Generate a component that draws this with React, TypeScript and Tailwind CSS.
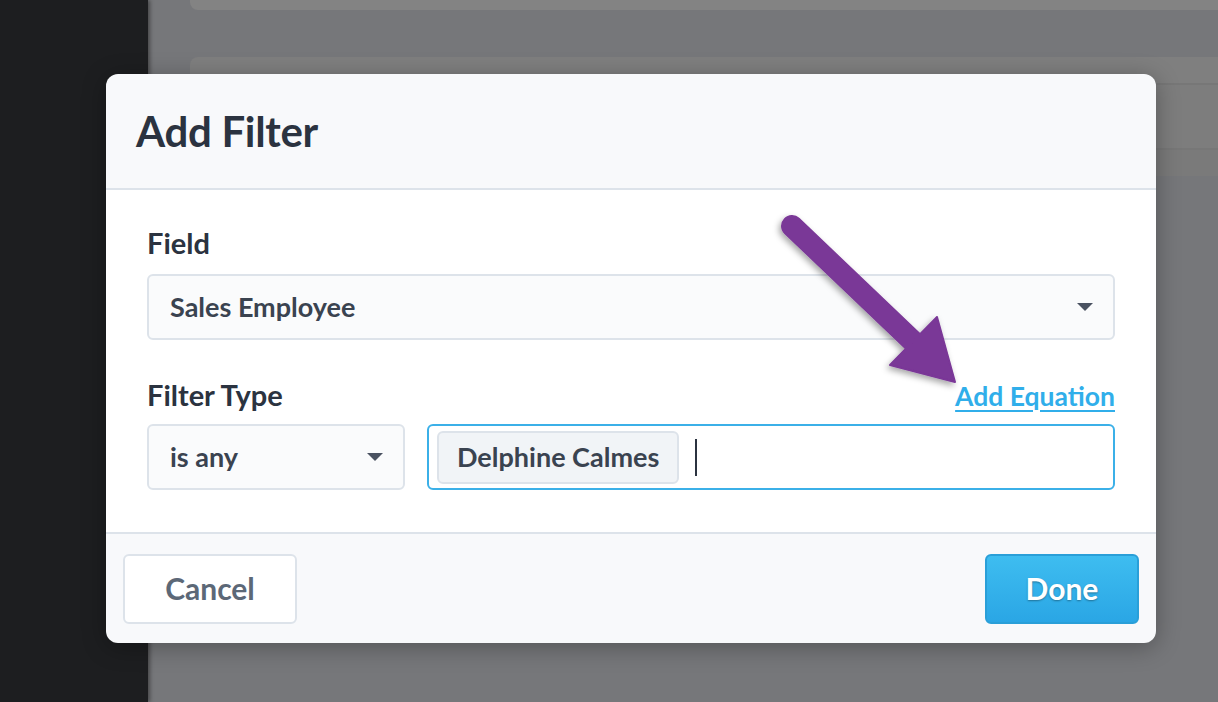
const font = { fontFamily: 'Lato, "Open Sans", sans-serif' };

function Caret() {
  return (
    <svg width="16" height="8" viewBox="0 0 16 8" className="shrink-0">
      <path d="M0 0 H16 L8 8 Z" fill="#4a5261" />
    </svg>
  );
}

function Arrow() {
  // purple annotation arrow drawn over the dialog
  return (
    <svg
      className="absolute left-0 top-0 pointer-events-none"
      width="1218"
      height="702"
      viewBox="0 0 1218 702"
    >
      <defs>
        <filter id="arrowShadow" x="-20%" y="-20%" width="140%" height="140%">
          <feDropShadow dx="-2" dy="3" stdDeviation="3" floodColor="#000" floodOpacity="0.35" />
        </filter>
      </defs>
      <g filter="url(#arrowShadow)" fill="#7a3797" stroke="#7a3797">
        <line x1="792" y1="226" x2="922" y2="350" strokeWidth="22" strokeLinecap="round" />
        <path d="M955 382 L937 317 L890 365 Z" strokeWidth="2" strokeLinejoin="round" />
      </g>
    </svg>
  );
}

export default function App() {
  return (
    <div className="relative w-[1218px] h-[702px] overflow-hidden bg-[#76777a]" style={font}>
      {/* page behind the backdrop */}
      <div className="flex h-full">
        <div className="w-[148px] bg-[#1d1e20] shadow-[2px_0_4px_rgba(0,0,0,0.4)]" />
        <div className="flex-1 flex flex-col pl-[42px]">
          <div className="h-[10px] bg-[#838383] rounded-bl-[8px]" />
          <div className="mt-[47px] h-[28px] bg-[#7f7f7f] rounded-tl-[8px] border-b-2 border-[#777]" />
          <div className="h-[65px] bg-[#7d7d7d] border-b-2 border-[#777]" />
          <div className="h-[26px] bg-[#7a7a7a]" />
        </div>
      </div>

      {/* dialog */}
      <div className="absolute left-[106px] top-[74px] w-[1050px] h-[569px] rounded-[12px] bg-[#f8f9fb] shadow-[0_4px_24px_rgba(0,0,0,0.3)] flex flex-col overflow-hidden">
        <div className="h-[116px] flex items-center px-[30px] border-b-2 border-[#dde3ea]">
          <h1 className="text-[42px] font-bold text-[#2b3340] tracking-[-0.3px] leading-none">Add Filter</h1>
        </div>

        <div className="flex-1 bg-white px-[41px] pt-[38px] border-b-2 border-[#dde3ea]">
          <div className="text-[29px] font-bold text-[#2b3340] leading-none">Field</div>
          <div className="mt-[17px] h-[66px] rounded-[6px] border-2 border-[#dde3ea] bg-[#fafbfc] flex items-center justify-between pl-[21px] pr-[20px]">
            <span className="text-[27px] font-bold text-[#3a4350]">Sales Employee</span>
            <Caret />
          </div>

          <div className="mt-[40px] flex items-end justify-between">
            <div className="text-[29px] font-bold text-[#2b3340] leading-none">Filter Type</div>
            <a className="text-[26.5px] font-bold text-[#30aeea] underline decoration-2 underline-offset-[4px] leading-none">
              Add Equation
            </a>
          </div>

          <div className="mt-[15px] flex gap-[22px]">
            <div className="w-[258px] h-[66px] rounded-[6px] border-2 border-[#dde3ea] bg-[#fafbfc] flex items-center justify-between pl-[21px] pr-[20px]">
              <span className="text-[27px] font-bold text-[#3a4350]">is any</span>
              <Caret />
            </div>
            <div className="flex-1 h-[66px] rounded-[6px] border-2 border-[#3bb0e8] bg-white flex items-center pl-[8px] gap-[16px]">
              <span className="h-[53px] px-[18px] rounded-[6px] border-2 border-[#dde3ea] bg-[#f1f4f7] flex items-center text-[27px] font-bold text-[#3a4350]">
                Delphine Calmes
              </span>
              <span className="w-[2px] h-[37px] bg-[#2b3340]" />
            </div>
          </div>
        </div>

        <div className="h-[109px] flex items-center justify-between px-[17px]">
          <button className="w-[174px] h-[70px] rounded-[6px] border-2 border-[#dde3ea] bg-white text-[30px] font-bold text-[#5c6877]">
            Cancel
          </button>
          <button className="w-[154px] h-[70px] rounded-[6px] border-2 border-[#2a9fd8] bg-gradient-to-b from-[#3ebdf0] to-[#2aa6e5] text-[30px] font-bold text-white [text-shadow:0_1px_2px_rgba(0,0,0,0.35)]">
            Done
          </button>
        </div>
      </div>

      <Arrow />
    </div>
  );
}
